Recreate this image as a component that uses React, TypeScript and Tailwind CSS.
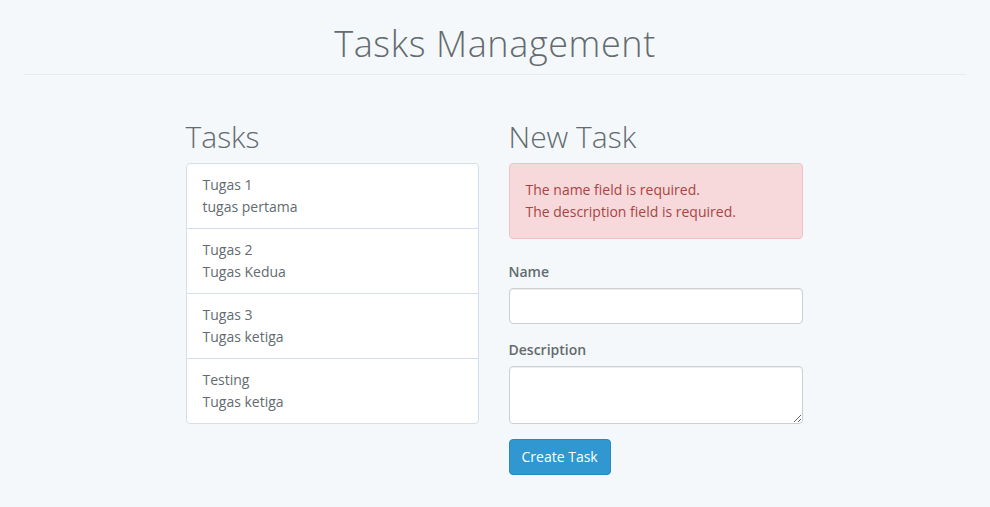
export default function App() {
  const tasks = [
    { name: 'Tugas 1', description: 'tugas pertama' },
    { name: 'Tugas 2', description: 'Tugas Kedua' },
    { name: 'Tugas 3', description: 'Tugas ketiga' },
    { name: 'Testing', description: 'Tugas ketiga' },
  ]

  return (
    <div className="min-h-[507px] bg-[#f5f8fa] text-[14px] leading-[22px] text-[#636b6f] font-['Open_Sans',sans-serif]">
      <div className="mx-[24px] pt-[24px] pb-[10px] border-b border-[#e6ebee] text-center">
        <h1 className="text-[36px] leading-[40px] font-light tracking-[0.6px] text-[#636b6f]">Tasks Management</h1>
      </div>

      <div className="flex justify-center gap-[30px] pt-[45px] pr-[2px]">
        {/* Task list */}
        <div className="w-[293px]">
          <h2 className="text-[30px] leading-[33px] font-light mb-[10px]">Tasks</h2>
          <div className="bg-white border border-[#d3e0e9] rounded-[4px]">
            {tasks.map((t, i) => (
              <div key={i} className={`pl-[16px] pr-[15px] py-[10px] ${i > 0 ? 'border-t border-[#d3e0e9]' : ''}`}>
                <div>{t.name}</div>
                <div>{t.description}</div>
              </div>
            ))}
          </div>
        </div>

        {/* Form */}
        <div className="w-[294px]">
          <h2 className="text-[30px] leading-[33px] font-light mb-[10px]">New Task</h2>
          <div className="bg-[#f7d9dc] border border-[#f0c2c8] rounded-[4px] pl-[16px] pr-[15px] py-[15px] text-[#a94442] mb-[22px]">
            <div>The name field is required.</div>
            <div>The description field is required.</div>
          </div>
          <div className="mb-[15px]">
            <label className="block font-semibold mb-[5px]">Name</label>
            <input className="block w-full h-[36px] bg-white border border-[#ccd0d2] rounded-[4px] px-[12px] outline-none shadow-[inset_0_1px_1px_rgba(0,0,0,0.075)]" />
          </div>
          <div className="mb-[15px]">
            <label className="block font-semibold mb-[5px]">Description</label>
            <textarea className="block w-full h-[58px] bg-white border border-[#ccd0d2] rounded-[4px] px-[12px] outline-none shadow-[inset_0_1px_1px_rgba(0,0,0,0.075)]" />
          </div>
          <button className="h-[36px] px-[12px] bg-[#3097d1] border border-[#2a88bd] rounded-[4px] text-white">
            Create Task
          </button>
        </div>
      </div>
    </div>
  )
}
